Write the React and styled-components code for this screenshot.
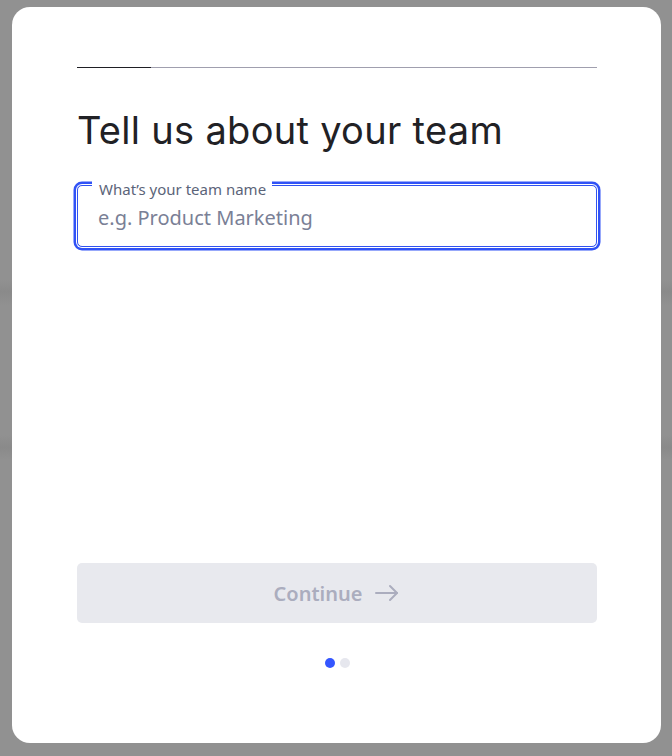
import React from 'react';
import styled, { createGlobalStyle } from 'styled-components';

const GlobalStyle = createGlobalStyle`
  html, body {
    margin: 0;
    padding: 0;
    height: 100%;
  }
  body {
    background: #8f8f8f;
    font-family: 'Noto Sans', 'Open Sans', sans-serif;
  }
`;

const Backdrop = styled.div`
  width: 672px;
  height: 756px;
  box-sizing: border-box;
  padding: 7px 11px 13px 12px;
  background:
    linear-gradient(
      to bottom,
      #919191 0px,
      #919191 280px,
      #8a8a8a 292px,
      #919191 305px,
      #919191 435px,
      #8a8a8a 447px,
      #919191 460px,
      #919191 100%
    );
`;

const Card = styled.div`
  height: 100%;
  box-sizing: border-box;
  background: #ffffff;
  border-radius: 18px;
  padding: 60px 64px 0 65px;
  display: flex;
  flex-direction: column;
`;

const Progress = styled.div`
  display: flex;
  height: 1px;
  background: #a09fae;
`;

const ProgressFill = styled.div`
  height: 1px;
  background: #1f1f24;
`;

const Title = styled.h1`
  margin: 40px 0 0;
  font-family: 'Inter', 'Open Sans', sans-serif;
  font-weight: 400;
  font-size: 38px;
  line-height: 44px;
  color: #212125;
  letter-spacing: 0.3px;
`;

const Field = styled.label`
  position: relative;
  margin-top: 33px;
  height: 62px;
  box-sizing: border-box;
  padding: 0 20px;
  border: 1px solid #3052f0;
  border-radius: 5px;
  box-shadow: 0 0 0 1px #ffffff, 0 0 0 3.5px #3052f6;
  display: flex;
  align-items: center;
`;

const FieldLabel = styled.span`
  position: absolute;
  left: 14px;
  top: -5px;
  padding: 0 6px 0 7px;
  background: #ffffff;
  font-size: 15px;
  line-height: 17px;
  color: #5b6479;
`;

const Input = styled.input`
  width: 100%;
  margin-top: 4px;
  border: none;
  outline: none;
  padding: 0;
  background: transparent;
  font-family: 'Noto Sans', 'Open Sans', sans-serif;
  font-size: 20px;
  line-height: 28px;
  color: #212125;
  caret-color: #212125;
  &::placeholder {
    color: #7a8096;
  }
`;

const Spacer = styled.div`
  flex: 1;
`;

const Button = styled.button`
  height: 60px;
  border: none;
  border-radius: 5px;
  background: #e8e9ee;
  color: #abadbe;
  font-family: 'Noto Sans', 'Open Sans', sans-serif;
  font-size: 20px;
  font-weight: 600;
  display: flex;
  align-items: center;
  justify-content: center;
  gap: 12px;
  cursor: not-allowed;
`;

const Dots = styled.div`
  display: flex;
  justify-content: center;
  gap: 5px;
  margin: 35px 0 75px;
`;

const Dot = styled.span`
  width: 10px;
  height: 10px;
  border-radius: 50%;
  background: ${(p) => (p.$active ? '#3456ff' : '#e6e7ee')};
`;

const Arrow = () => (
  <svg width="26" height="18" viewBox="0 0 26 18" fill="none" stroke="currentColor" strokeWidth="2" strokeLinecap="round" strokeLinejoin="round">
    <path d="M2 9h21" />
    <path d="M16 2l7 7-7 7" />
  </svg>
);

const App = () => {
  const steps = [true, false];
  return (
    <>
      <GlobalStyle />
      <Backdrop>
        <Card>
          <Progress>
            <ProgressFill style={{ width: `${(1 / 7) * 100}%` }} />
          </Progress>
          <Title>Tell us about your team</Title>
          <Field>
            <FieldLabel>What’s your team name</FieldLabel>
            <Input autoFocus placeholder='e.g. Product Marketing' />
          </Field>
          <Spacer />
          <Button disabled>
            Continue
            <Arrow />
          </Button>
          <Dots>
            {steps.map((active, index) => (
              <Dot key={index} $active={active} />
            ))}
          </Dots>
        </Card>
      </Backdrop>
    </>
  );
};

export default App;
